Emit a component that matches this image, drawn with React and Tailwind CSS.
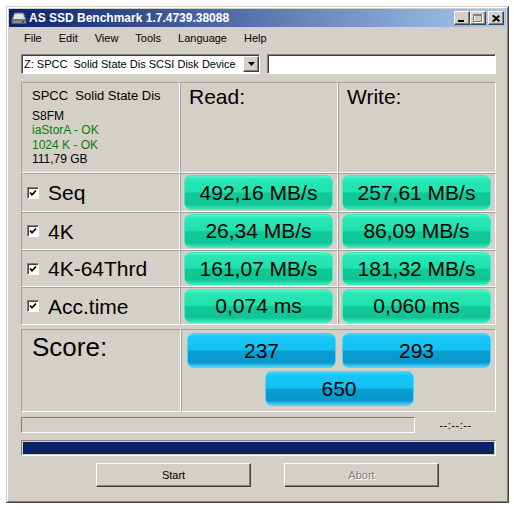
import React from "react";

const raised =
  "border border-t-white border-l-white border-r-[#404040] border-b-[#404040] shadow-[inset_-1px_-1px_0_#808080]";
const sunken =
  "border border-t-[#808080] border-l-[#808080] border-r-white border-b-white shadow-[inset_1px_1px_0_#404040]";
const cell =
  "border border-t-[#a0a0a0] border-l-[#a0a0a0] border-r-white border-b-white";

const greenBtn =
  "flex-1 h-full rounded-[7px] border border-[#3fecc0] bg-[linear-gradient(to_bottom,#55f3cc_0%,#27e8b6_10%,#1fe2ae_48%,#10c999_52%,#0fc596_86%,#38e6b9_100%)] flex items-center justify-center text-[21px] text-black";
const blueBtn =
  "w-[149px] h-[35px] rounded-[7px] border border-[#46d6fb] bg-[linear-gradient(to_bottom,#3cd4fb_0%,#17c6f6_10%,#13c1f2_48%,#0a9dd1_52%,#0998cc_86%,#4fd3f8_100%)] flex items-center justify-center text-[21px] text-black";

const rows = [
  { label: "Seq", read: "492,16 MB/s", write: "257,61 MB/s" },
  { label: "4K", read: "26,34 MB/s", write: "86,09 MB/s" },
  { label: "4K-64Thrd", read: "161,07 MB/s", write: "181,32 MB/s" },
  { label: "Acc.time", read: "0,074 ms", write: "0,060 ms" },
];

const DriveIcon = () => (
  <svg width="16" height="14" viewBox="0 0 16 14">
    <polygon points="3.5,2 12.5,2 15,9 1,9" fill="#c9c9c9" stroke="#6c6c6c" strokeWidth="1" />
    <polygon points="4.5,3 11.5,3 13.5,8 2.5,8" fill="#e2e2e2" />
    <rect x="1" y="9" width="14" height="3.5" fill="#8c8c8c" stroke="#5a5a5a" strokeWidth="1" />
    <rect x="11" y="10" width="2" height="1.5" fill="#3a3a3a" />
  </svg>
);

const Check = () => (
  <div className={`w-[12px] h-[12px] bg-white ${sunken} flex items-center justify-center`}>
    <svg width="8" height="8" viewBox="0 0 8 8">
      <polyline points="1,3.5 3,5.8 7,1.5" fill="none" stroke="#000" strokeWidth="1.7" />
    </svg>
  </div>
);

export default function App() {
  return (
    <div
      className="w-[514px] h-[510px] bg-white pt-[6px] pl-[6px]"
      style={{ fontFamily: '"Liberation Sans", Arial, sans-serif' }}
    >
      <div className="w-[503px] h-[497px] bg-[#d4d0c8] border border-t-[#d4d0c8] border-l-[#d4d0c8] border-r-[#404040] border-b-[#404040]">
        <div className="h-full border border-t-white border-l-white border-r-[#808080] border-b-[#808080] p-px flex flex-col">
          {/* Title bar */}
          <div className="h-[18px] flex items-center bg-[linear-gradient(to_right,#0a246a,#a6caf0)]">
            <div className="ml-[2px]">
              <DriveIcon />
            </div>
            <span className="ml-[2px] text-white font-bold text-[12px] leading-none">
              AS SSD Benchmark 1.7.4739.38088
            </span>
            <div className="ml-auto mr-[2px] flex items-center">
              <div className={`w-[16px] h-[14px] bg-[#d4d0c8] ${raised} flex items-end pl-[3px] pb-[2px]`}>
                <div className="w-[6px] h-[2px] bg-black" />
              </div>
              <div className={`w-[16px] h-[14px] bg-[#d4d0c8] ${raised} flex items-center justify-center`}>
                <svg width="10" height="9" viewBox="0 0 10 9">
                  <rect x="1.5" y="1.5" width="8" height="7" fill="none" stroke="#fff" />
                  <rect x="0.5" y="0.5" width="8" height="7" fill="none" stroke="#808080" />
                  <line x1="0.5" y1="1.5" x2="8.5" y2="1.5" stroke="#808080" />
                </svg>
              </div>
              <div className={`ml-[2px] w-[16px] h-[14px] bg-[#d4d0c8] ${raised} flex items-center justify-center`}>
                <svg width="8" height="7" viewBox="0 0 8 7">
                  <path d="M0.5 0.5 L7 6.5 M1.5 0.5 L7.5 6 M7 0.5 L0.5 6.5 M7.5 1 L1.5 6.5" stroke="#000" strokeWidth="1.2" />
                </svg>
              </div>
            </div>
          </div>

          {/* Menu */}
          <div className="h-[22px] flex items-center pl-[15px] gap-[17px] text-[11px] text-black">
            <span>File</span>
            <span>Edit</span>
            <span>View</span>
            <span>Tools</span>
            <span>Language</span>
            <span>Help</span>
          </div>

          <div className="pl-[12px] pr-[10px] flex flex-col">
            {/* Drive selection */}
            <div className="mt-[5px] h-[20px] flex">
              <div className={`w-[239px] h-full bg-white ${sunken} flex items-center`}>
                <span className="pl-[2px] text-[11px] whitespace-pre text-black flex-1">
                  Z: SPCC  Solid State Dis SCSI Disk Device
                </span>
                <div className={`w-[16px] h-[16px] bg-[#d4d0c8] ${raised} flex items-center justify-center`}>
                  <svg width="7" height="4" viewBox="0 0 7 4">
                    <polygon points="0,0 7,0 3.5,4" fill="#000" />
                  </svg>
                </div>
              </div>
              <div className={`ml-[7px] flex-1 h-full bg-white ${sunken}`} />
            </div>

            {/* Results table */}
            <div className="mt-[8px] grid grid-cols-[159px_158px_158px] grid-rows-[91px_39px_38px_37px_38px]">
              <div className={`${cell} pl-[10px] pt-[5px] text-black`}>
                <div className="text-[13px] leading-[15px] whitespace-pre">SPCC  Solid State Dis</div>
                <div className="mt-[6px] text-[12px] leading-[14.3px]">
                  <div>S8FM</div>
                  <div className="text-[#0b7a0b]">iaStorA - OK</div>
                  <div className="text-[#0b7a0b]">1024 K - OK</div>
                  <div>111,79 GB</div>
                </div>
              </div>
              <div className={`${cell} pl-[8px] pt-[3px] text-[21px] leading-[21px]`}>Read:</div>
              <div className={`${cell} pl-[8px] pt-[3px] text-[21px] leading-[21px]`}>Write:</div>

              {rows.map((r) => (
                <React.Fragment key={r.label}>
                  <div className={`${cell} flex items-center pl-[5px]`}>
                    <Check />
                    <span className="ml-[9px] text-[21px] leading-none text-black">{r.label}</span>
                  </div>
                  <div className={`${cell} flex pl-[3px] pr-[4px] py-px`}>
                    <div className={greenBtn}>{r.read}</div>
                  </div>
                  <div className={`${cell} flex pl-[3px] pr-[4px] py-px`}>
                    <div className={greenBtn}>{r.write}</div>
                  </div>
                </React.Fragment>
              ))}
            </div>

            {/* Score */}
            <div className="mt-[4px] h-[83px] grid grid-cols-[160px_315px]">
              <div className={`${cell} pl-[10px] pt-[4px] text-[26px] leading-[26px] text-black`}>Score:</div>
              <div className={`${cell} pl-[5px] pt-[3px]`}>
                <div className="w-[304px] flex gap-[6px]">
                  <div className={blueBtn}>237</div>
                  <div className={blueBtn}>293</div>
                </div>
                <div className="w-[304px] mt-[3px] flex justify-center">
                  <div className={blueBtn}>650</div>
                </div>
              </div>
            </div>

            {/* Progress */}
            <div className="mt-[5px] h-[16px] flex items-center">
              <div className="w-[394px] h-full border border-t-[#808080] border-l-[#808080] border-r-white border-b-white" />
              <span className="flex-1 text-center text-[11px] text-black tracking-[0.5px]">--:--:--</span>
            </div>

            <div className="mt-[7px] h-[16px] border border-t-[#808080] border-l-[#808080] border-r-white border-b-white p-px">
              <div className="h-full bg-[#0a2364]" />
            </div>

            {/* Buttons */}
            <div className="mt-[7px] flex pl-[75px] gap-[33px]">
              <div className={`w-[155px] h-[24px] bg-[#d4d0c8] ${raised} flex items-center justify-center text-[11px] text-black`}>
                Start
              </div>
              <div className={`w-[155px] h-[24px] bg-[#d4d0c8] ${raised} flex items-center justify-center text-[11px] text-[#808080] [text-shadow:1px_1px_0_#fff]`}>
                Abort
              </div>
            </div>
          </div>
        </div>
      </div>
    </div>
  );
}
